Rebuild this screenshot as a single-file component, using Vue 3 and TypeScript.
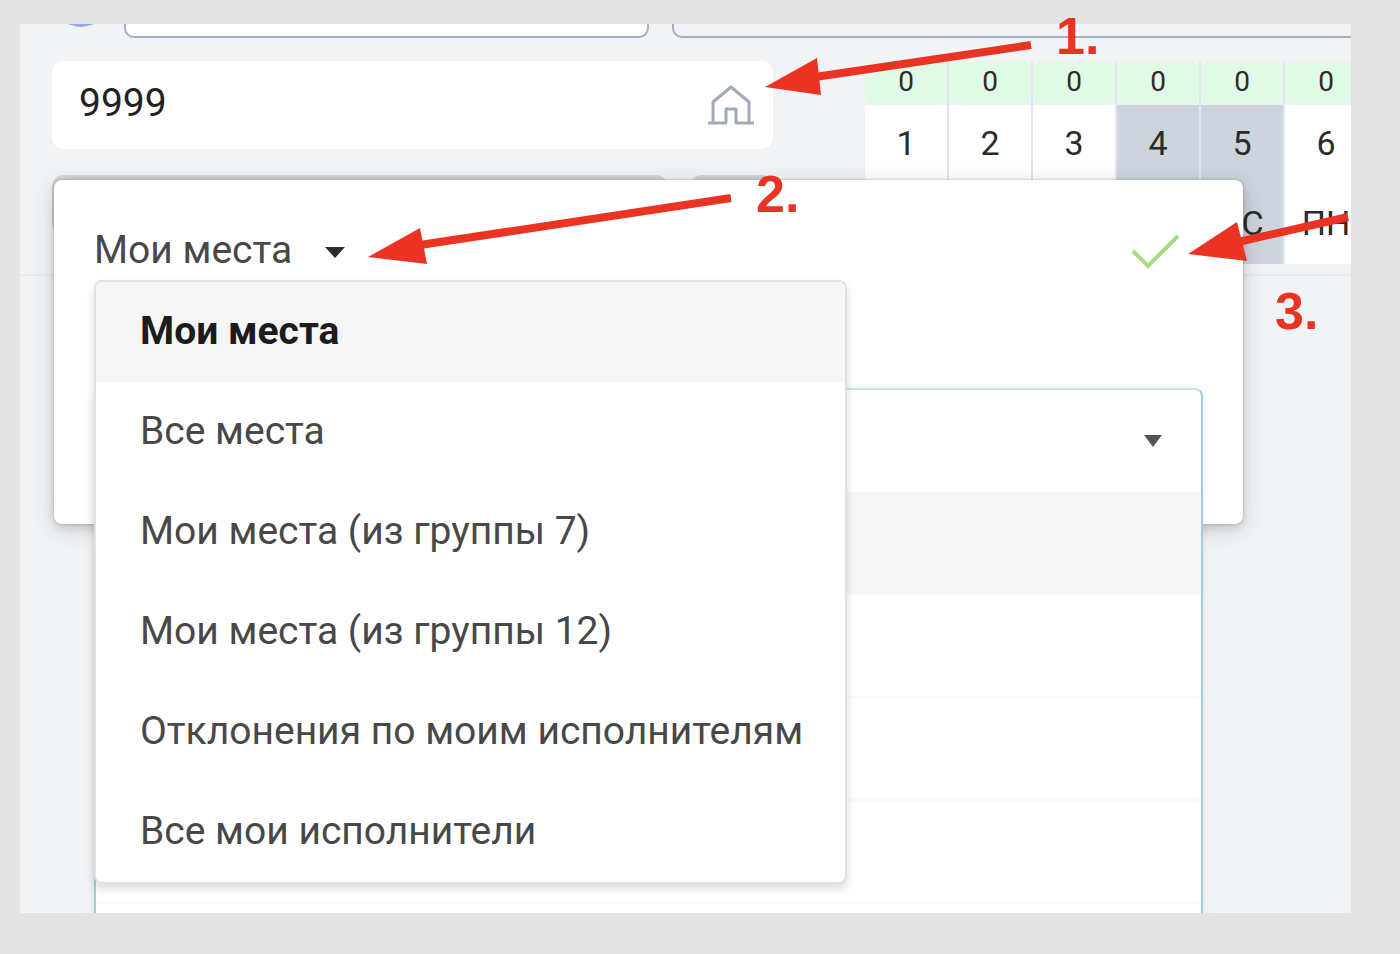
<script setup lang="ts">
import { ref } from 'vue'

interface Day {
  count: number
  date: number
  weekday: string
  weekend: boolean
}

const days: Day[] = [
  { count: 0, date: 1, weekday: '', weekend: false },
  { count: 0, date: 2, weekday: '', weekend: false },
  { count: 0, date: 3, weekday: '', weekend: false },
  { count: 0, date: 4, weekday: '', weekend: true },
  { count: 0, date: 5, weekday: 'ВС', weekend: true },
  { count: 0, date: 6, weekday: 'ПН', weekend: false },
]

const filters: string[] = [
  'Мои места',
  'Все места',
  'Мои места (из группы 7)',
  'Мои места (из группы 12)',
  'Отклонения по моим исполнителям',
  'Все мои исполнители',
]

const search = ref('9999')
const selected = ref(filters[0])
</script>

<template>
  <div class="page">
    <main class="board">
      <div class="strip">
        <span class="dot"></span>
        <input class="strip-field filled" type="text" aria-label="Поле 1" />
        <input class="strip-field wide" type="text" aria-label="Поле 2" />
      </div>

      <div class="content">
        <div class="left">
          <div class="search">
            <input v-model="search" type="text" aria-label="Поиск" />
            <button type="button" class="icon-button" aria-label="Места">
              <svg width="48" height="42" viewBox="0 0 48 42" fill="none" stroke="#a0aabb" stroke-width="3">
                <path d="M6 39V18L24 3L42 18V39" stroke-linejoin="round" />
                <path d="M19 39V25H29V39" stroke-linejoin="round" />
                <path d="M1 39H20M28 39H47" />
              </svg>
            </button>
          </div>
          <div class="below">
            <span class="below-box main-box"></span>
            <span class="below-box"></span>
          </div>
        </div>

        <table class="calendar">
          <thead>
            <tr class="counts">
              <td v-for="d in days" :key="d.date"><span>{{ d.count }}</span></td>
            </tr>
            <tr class="dates">
              <th v-for="d in days" :key="d.date" :class="{ weekend: d.weekend }">{{ d.date }}</th>
            </tr>
            <tr class="weekdays">
              <td v-for="d in days" :key="d.date" :class="{ weekend: d.weekend }">{{ d.weekday }}</td>
            </tr>
          </thead>
        </table>
      </div>
      <hr class="divider" />

      <section class="popover">
        <header class="popover-head">
          <button type="button" class="trigger" aria-haspopup="listbox" aria-expanded="true">
            {{ selected }}
            <svg width="20" height="18" viewBox="0 0 20 18"><path d="M0 6H20L10 17Z" fill="#2b2b2b" /></svg>
          </button>
          <button type="button" class="icon-button" aria-label="Применить">
            <svg width="50" height="42" viewBox="0 0 50 42" fill="none" stroke="#a5dd7c" stroke-width="4">
              <path d="M2 22L17 37L47 7" />
            </svg>
          </button>
        </header>

        <div class="combo">
          <div class="combo-panel">
            <button type="button" class="combo-toggle" aria-label="Открыть список">
              <svg width="18" height="12" viewBox="0 0 18 12"><path d="M0 0H18L9 12Z" fill="#555" /></svg>
            </button>
            <ul>
              <li class="active"></li>
              <li></li>
              <li></li>
              <li></li>
              <li></li>
            </ul>
          </div>
        </div>

        <ul class="menu" role="listbox" aria-label="Фильтр мест">
          <li v-for="f in filters" :key="f" role="presentation">
            <button
              type="button"
              role="option"
              :aria-selected="f === selected"
              :class="{ current: f === selected }"
              @click="selected = f"
            >
              {{ f }}
            </button>
          </li>
        </ul>
      </section>
    </main>

    <div class="notes">
      <svg width="1400" height="320" viewBox="0 0 1400 320" fill="#ea3323" stroke="#ea3323">
        <path d="M1031 45L815 77" stroke-width="8" />
        <path d="M765 87L817 58L821 95Z" stroke="none" />
        <path d="M731 198L420 245" stroke-width="8" />
        <path d="M368 257L420 228L427 264Z" stroke="none" />
        <path d="M1348 217L1238 242" stroke-width="8" />
        <path d="M1188 254L1237 222L1247 261Z" stroke="none" />
      </svg>
      <span class="note one">1.</span>
      <span class="note two">2.</span>
      <span class="note three">3.</span>
    </div>
  </div>
</template>

<style>
body {
  margin: 0;
  background: #e4e4e4;
}
</style>

<style scoped>
.page {
  position: relative;
  box-sizing: border-box;
  display: flex;
  height: 100vh;
  padding: 24px 49px 41px 20px;
  overflow: hidden;
  background: #e4e4e4;
  color: #484848;
  font-family: Roboto, "Liberation Sans", sans-serif;
}

button,
input {
  box-sizing: border-box;
  margin: 0;
  padding: 0;
  border: 0;
  background: none;
  color: inherit;
  font: inherit;
  outline: none;
}

ul {
  margin: 0;
  padding: 0;
  list-style: none;
}

svg {
  display: block;
}

.board {
  position: relative;
  flex: 1;
  min-width: 0;
  overflow: hidden;
  background: #f2f3f5;
}

.strip {
  display: flex;
  align-items: flex-end;
  height: 14px;
  padding-left: 33px;
}

.dot {
  flex: none;
  width: 56px;
  height: 56px;
  margin: 0 15px 11px 0;
  border-radius: 50%;
  background: #93a5f5;
}

.strip-field {
  flex: 524 1 0;
  min-width: 0;
  height: 64px;
  border: 2px solid #a3b1c6;
  border-radius: 10px;
}

.strip-field.filled {
  background: #fff;
}

.strip-field.wide {
  flex-grow: 680;
  margin-left: 23px;
  border-right: 0;
  border-radius: 10px 0 0 10px;
}

.content {
  display: grid;
  grid-template-columns: minmax(0, 721fr) minmax(0, 486fr);
  gap: 92px;
  margin: 23px 0 0 32px;
}

.left {
  min-width: 0;
}

.search {
  display: flex;
  align-items: center;
  height: 88px;
  padding: 0 18px 0 27px;
  border-radius: 12px;
  background: #fff;
}

.search input {
  flex: 1;
  min-width: 0;
  height: 84px;
  padding-bottom: 4px;
  color: #212121;
  font-size: 39px;
}

.icon-button {
  flex: none;
  cursor: pointer;
}

.below {
  display: flex;
  gap: 22px;
  margin-top: 26px;
}

.below-box {
  flex: 83;
  height: 60px;
  border-radius: 12px;
  background: #d4d5d7;
}

.main-box {
  flex: 616;
}

.calendar {
  width: 504px;
  border-spacing: 0;
  table-layout: fixed;
  color: #2b2b2b;
  font-size: 34px;
  text-align: center;
}

.calendar th,
.calendar td {
  padding: 0;
  border-right: 2px solid #e3e6f0;
  background: #fff;
  font-weight: 400;
}

.calendar .counts td {
  height: 44px;
  font-size: 28px;
  background: #f2f3f5;
}

.counts span {
  display: block;
  height: 44px;
  border-radius: 8px;
  background: #e1f9e7;
  line-height: 42px;
}

.dates th {
  height: 76px;
}

.weekdays td {
  height: 83px;
}

.calendar .weekend {
  background: #ced4dc;
}

.divider {
  height: 2px;
  margin: 10px 0 0;
  border: 0;
  background: #e9ebf0;
}

.popover {
  position: absolute;
  top: 156px;
  right: 108px;
  left: 34px;
  padding: 32px 40px;
  border-radius: 8px;
  background: #fff;
  box-shadow: 0 0 3px rgba(0, 0, 0, 0.2), 0 5px 24px rgba(0, 0, 0, 0.16), 0 4px 8px rgba(0, 0, 0, 0.1);
}

.popover-head {
  display: flex;
  align-items: center;
  justify-content: space-between;
  height: 76px;
  padding-right: 22px;
}

.trigger {
  display: flex;
  align-items: center;
  gap: 33px;
  font-size: 39px;
  cursor: pointer;
}

.combo {
  position: relative;
  height: 104px;
  margin-top: 100px;
}

.combo-panel {
  position: absolute;
  top: 0;
  right: 0;
  left: 0;
  border: 2px solid #a2cbdb;
  border-top-color: #cbe2ea;
  border-radius: 8px;
  background: #fff;
  box-shadow: 0 2px 8px rgba(0, 0, 0, 0.08);
}

.combo-toggle {
  display: flex;
  align-items: center;
  justify-content: flex-end;
  width: 100%;
  height: 102px;
  padding-right: 39px;
  cursor: pointer;
}

.combo-panel li {
  box-sizing: border-box;
  height: 103px;
  border-bottom: 2px solid #fafafa;
}

.combo-panel .active {
  background: #f6f6f6;
}

.menu {
  position: absolute;
  top: 100px;
  left: 40px;
  border: 2px solid #e1e1e1;
  border-radius: 8px;
  background: #fff;
  box-shadow: 0 5px 10px rgba(0, 0, 0, 0.14);
}

.menu button {
  display: block;
  width: 100%;
  height: 100px;
  padding: 0 42px 2px 44px;
  font-size: 39px;
  text-align: left;
  white-space: nowrap;
  cursor: pointer;
}

.menu .current {
  border-radius: 6px 6px 0 0;
  background: #f6f6f6;
  color: #1c1c1c;
  font-weight: 700;
}

.notes {
  position: absolute;
  top: 0;
  left: 0;
  pointer-events: none;
}

.note {
  position: absolute;
  color: #ea3323;
  font-family: "Liberation Sans", Arial, sans-serif;
  font-size: 52px;
  font-weight: 700;
  line-height: 60px;
}

.one {
  top: 6px;
  left: 1056px;
}

.two {
  top: 164px;
  left: 756px;
}

.three {
  top: 281px;
  left: 1275px;
}
</style>
